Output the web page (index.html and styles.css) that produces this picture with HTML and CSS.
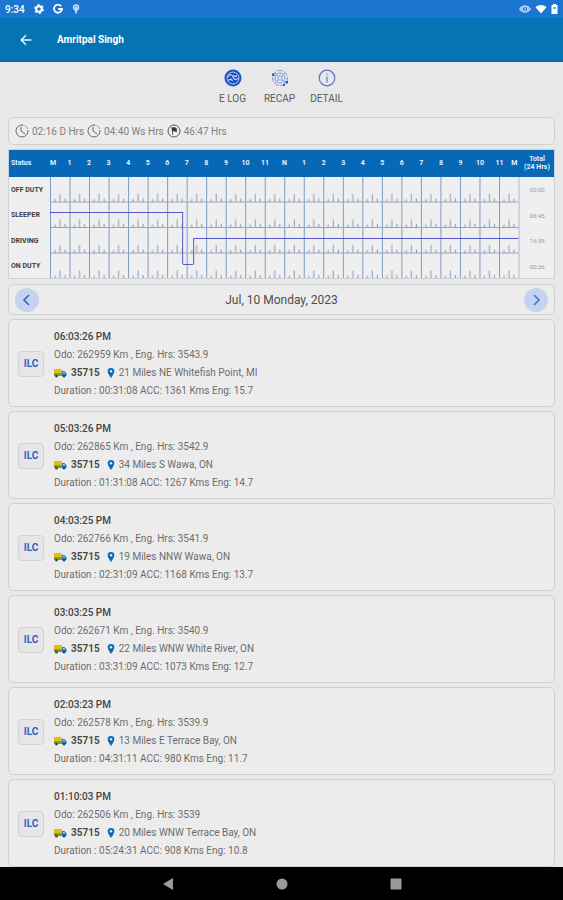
FILE: index.html
```html
<!DOCTYPE html>
<html lang="en">
<head>
<meta charset="utf-8">
<meta name="viewport" content="width=device-width, initial-scale=1">
<title>Driver Log</title>
<link rel="stylesheet" href="styles.css">
</head>
<body>
<svg class="sprite" aria-hidden="true">
  <symbol id="truck" viewBox="0 0 13 10">
    <rect x="0" y="1" width="8" height="4" fill="#e3bd18"/>
    <rect x="0" y="5" width="8" height="3" fill="#8a9a2c"/>
    <path d="M8 3h2.500L12.500 5.500V8H8z" fill="#2774ad"/>
    <path d="M9 4h1.200l1 1.500H9z" fill="#b5d4e8"/>
    <circle cx="2.500" cy="8" r="1.500" fill="#25604f"/>
    <circle cx="10" cy="8" r="1.500" fill="#174f86"/>
  </symbol>
  <symbol id="pin" viewBox="0 0 8 10">
    <path d="M4 0a3.300 3.300 0 0 0-3.300 3.300C.7 5.800 4 10 4 10s3.300-4.200 3.300-6.700A3.300 3.300 0 0 0 4 0z" fill="#0c6bb8"/>
    <circle cx="4" cy="3.300" r="1.200" fill="#dce9f3"/>
  </symbol>
  <symbol id="clock" viewBox="0 0 14 14">
    <g fill="none" stroke="#666" stroke-width="1">
      <path d="M8.500 1.200A6 6 0 1 0 12.900 6"/>
      <path d="M9.800 1.700A6 6 0 0 1 12.500 4.500" stroke-dasharray="1.500 1"/>
      <path d="M6 3v4l4 3"/>
    </g>
  </symbol>
</svg>

<div class="status-bar">
  <span class="time">9:34</span>
  <svg width="10" height="10" viewBox="0 0 10 10"><circle cx="5" cy="5" r="2.800" fill="none" stroke="#fff" stroke-width="2"/><circle cx="5" cy="5" r="4.200" fill="none" stroke="#fff" stroke-width="1.400" stroke-dasharray="2.200 2.200"/></svg>
  <svg width="10" height="10" viewBox="0 0 10 10"><path d="M8.200 2.300A4 4 0 1 0 9 5H5.200" fill="none" stroke="#fff" stroke-width="1.800"/></svg>
  <svg width="8" height="10" viewBox="0 0 8 10"><circle cx="4" cy="3.500" r="2.600" fill="#78aee8" stroke="#d5e6fa" stroke-width="1.200"/><path d="M4 3v6.500" stroke="#d5e6fa" stroke-width="1.600"/></svg>
  <span class="spacer"></span>
  <svg width="12" height="10" viewBox="0 0 12 10"><circle cx="6" cy="5" r="3" fill="none" stroke="#b9d6f5" stroke-width="1.600"/><path d="M6 3.500v3M3 2.500.8 5 3 7.500M9 2.500 11.200 5 9 7.500" fill="none" stroke="#b9d6f5" stroke-width="1.200"/></svg>
  <svg width="12" height="10" viewBox="0 0 12 10"><path d="M.5 3.200C3.500.2 8.500.2 11.500 3.200L6 9.500z" fill="#fff"/></svg>
  <svg width="7" height="10" viewBox="0 0 7 10"><path d="M2 0h3v1h1.500v9h-6V1H2z" fill="#fff"/><path d="M2 3h3v2H2z" fill="#7fb0e4"/></svg>
</div>

<header class="app-bar">
  <button class="back" type="button" aria-label="Back">
    <svg width="12" height="12" viewBox="0 0 12 12"><path d="M11.500 6H1.500M6 1.200 1.200 6 6 10.800" fill="none" stroke="#e4f1fa" stroke-width="1.600"/></svg>
  </button>
  <h1>Amritpal Singh</h1>
</header>

<main>
  <nav class="tabs">
    <a href="#elog">
      <svg width="18" height="18" viewBox="0 0 18 18"><circle cx="9" cy="9" r="8.500" fill="#1d4fc4"/><circle cx="9" cy="9" r="6" fill="none" stroke="#b9cbf3" stroke-width="1"/><path d="M4 8c2-4 4-2 5 0s3 4 5 1M4.500 11.500c2-2 3-1 4 .5M9.500 6c1 1.500 2 2 3.500.5" fill="none" stroke="#c9d7f6" stroke-width="1.200"/></svg>
      <span>E LOG</span>
    </a>
    <a href="#recap">
      <svg width="18" height="18" viewBox="0 0 18 18"><g fill="none" stroke="#7b96d8" stroke-width="1"><circle cx="9" cy="9" r="7.500" stroke-dasharray="5 1.500"/><circle cx="9" cy="9" r="5"/><circle cx="9" cy="9" r="2.200"/><path d="M4 4l3.500 3.500M14 4l-3.500 3.500M4 14l3.500-3.500M14 14l-3.500-3.500"/></g><path d="M1 4.500h2.500v2.500H1zM14.500 12H17v2.500h-2.500zM12 15h2v2h-2z" fill="#2d5bcb"/></svg>
      <span>RECAP</span>
    </a>
    <a href="#detail">
      <svg width="18" height="18" viewBox="0 0 18 18"><circle cx="9" cy="9" r="7.800" fill="none" stroke="#5b74c6" stroke-width="1.200"/><path d="M9 4.500v1.500M9 7.500v6" stroke="#6c86ce" stroke-width="1.300"/></svg>
      <span>DETAIL</span>
    </a>
  </nav>

  <section class="panel hours">
    <span><svg width="14" height="14"><use href="#clock"/></svg>02:16 D Hrs</span>
    <span><svg width="14" height="14"><use href="#clock"/></svg>04:40 Ws Hrs</span>
    <span><svg width="14" height="14" viewBox="0 0 14 14"><circle cx="7" cy="7" r="6" fill="none" stroke="#555" stroke-width="1"/><path d="M4.500 3.500h3l2 1v3.500l-2-1H5.500v4" fill="#333" stroke="#555" stroke-width=".8"/></svg>46:47 Hrs</span>
  </section>

  <table class="log">
    <thead>
      <tr>
        <th class="label" scope="col">Status</th>
        <th scope="col">
          <div class="scale"><span>M</span><span>1</span><span>2</span><span>3</span><span>4</span><span>5</span><span>6</span><span>7</span><span>8</span><span>9</span><span>10</span><span>11</span><span>N</span><span>1</span><span>2</span><span>3</span><span>4</span><span>5</span><span>6</span><span>7</span><span>8</span><span>9</span><span>10</span><span>11</span><span>M</span></div>
        </th>
        <th class="total" scope="col">Total<br>(24 Hrs)</th>
      </tr>
    </thead>
    <tbody>
      <tr>
        <th class="label" scope="row">OFF DUTY</th>
        <td class="plot" rowspan="4">
          <svg viewBox="0 0 468 102" preserveAspectRatio="none" role="img" aria-label="Duty status over 24 hours">
            <defs>
              <pattern id="hour" width="19.500" height="25.500" patternUnits="userSpaceOnUse">
                <path d="M.5 0v25.500" stroke="#7f9ac2" stroke-width="1"/>
                <path d="M0 25h19.500" stroke="#91a6c4" stroke-width="1"/>
                <path d="M5 22v3M15 21.500v3.500" stroke="#8795a8" stroke-width="1"/>
                <path d="M10 17v8" stroke="#8e9bab" stroke-width="1"/>
              </pattern>
            </defs>
            <rect width="468" height="102" fill="url(#hour)"/>
            <path d="M0 35.500H132.500V86q0 1.500 1.500 1.500h8q1.500 0 1.500-1.500V61.500H468" fill="none" stroke="#5557cf" stroke-width="1"/>
          </svg>
        </td>
        <td class="total">00:00</td>
      </tr>
      <tr><th class="label" scope="row">SLEEPER</th><td class="total">06:45</td></tr>
      <tr><th class="label" scope="row">DRIVING</th><td class="total">16:39</td></tr>
      <tr><th class="label" scope="row">ON DUTY</th><td class="total">00:36</td></tr>
    </tbody>
  </table>

  <section class="panel date">
    <button type="button" aria-label="Previous day"><svg width="12" height="12" viewBox="0 0 12 12"><path d="M8 1 3 6l5 5" fill="none" stroke="#3565c8" stroke-width="1.600"/></svg></button>
    <h2>Jul, 10 Monday, 2023</h2>
    <button type="button" aria-label="Next day"><svg width="12" height="12" viewBox="0 0 12 12"><path d="m4 1 5 5-5 5" fill="none" stroke="#4571d2" stroke-width="1.600"/></svg></button>
  </section>

  <ul class="events">
    <li class="panel event"><span class="badge">ILC</span><div class="info"><h3>06:03:26 PM</h3><p>Odo: 262959 Km , Eng. Hrs: 3543.9</p><p class="place"><svg width="13" height="10"><use href="#truck"/></svg><b>35715</b><svg width="8" height="10"><use href="#pin"/></svg>21 Miles NE Whitefish Point, MI</p><p>Duration : 00:31:08 ACC: 1361 Kms Eng: 15.7</p></div></li>
    <li class="panel event"><span class="badge">ILC</span><div class="info"><h3>05:03:26 PM</h3><p>Odo: 262865 Km , Eng. Hrs: 3542.9</p><p class="place"><svg width="13" height="10"><use href="#truck"/></svg><b>35715</b><svg width="8" height="10"><use href="#pin"/></svg>34 Miles S Wawa, ON</p><p>Duration : 01:31:08 ACC: 1267 Kms Eng: 14.7</p></div></li>
    <li class="panel event"><span class="badge">ILC</span><div class="info"><h3>04:03:25 PM</h3><p>Odo: 262766 Km , Eng. Hrs: 3541.9</p><p class="place"><svg width="13" height="10"><use href="#truck"/></svg><b>35715</b><svg width="8" height="10"><use href="#pin"/></svg>19 Miles NNW Wawa, ON</p><p>Duration : 02:31:09 ACC: 1168 Kms Eng: 13.7</p></div></li>
    <li class="panel event"><span class="badge">ILC</span><div class="info"><h3>03:03:25 PM</h3><p>Odo: 262671 Km , Eng. Hrs: 3540.9</p><p class="place"><svg width="13" height="10"><use href="#truck"/></svg><b>35715</b><svg width="8" height="10"><use href="#pin"/></svg>22 Miles WNW White River, ON</p><p>Duration : 03:31:09 ACC: 1073 Kms Eng: 12.7</p></div></li>
    <li class="panel event"><span class="badge">ILC</span><div class="info"><h3>02:03:23 PM</h3><p>Odo: 262578 Km , Eng. Hrs: 3539.9</p><p class="place"><svg width="13" height="10"><use href="#truck"/></svg><b>35715</b><svg width="8" height="10"><use href="#pin"/></svg>13 Miles E Terrace Bay, ON</p><p>Duration : 04:31:11 ACC: 980 Kms Eng: 11.7</p></div></li>
    <li class="panel event"><span class="badge">ILC</span><div class="info"><h3>01:10:03 PM</h3><p>Odo: 262506 Km , Eng. Hrs: 3539</p><p class="place"><svg width="13" height="10"><use href="#truck"/></svg><b>35715</b><svg width="8" height="10"><use href="#pin"/></svg>20 Miles WNW Terrace Bay, ON</p><p>Duration : 05:24:31 ACC: 908 Kms Eng: 10.8</p></div></li>
  </ul>
</main>

<footer class="system-nav">
  <button type="button" aria-label="Back"><svg width="12" height="12" viewBox="0 0 12 12"><path d="M11 0v12L1 6z" fill="#9a9a9a"/></svg></button>
  <button type="button" aria-label="Home"><svg width="12" height="12" viewBox="0 0 12 12"><circle cx="6" cy="6" r="5.500" fill="#9a9a9a"/></svg></button>
  <button type="button" aria-label="Recent apps"><svg width="12" height="12" viewBox="0 0 12 12"><rect x=".5" y=".5" width="11" height="11" rx="1" fill="#9a9a9a"/></svg></button>
</footer>
</body>
</html>
```
FILE: styles.css
```css
* { box-sizing: border-box; margin: 0; padding: 0; }

body {
  display: flex;
  flex-direction: column;
  height: 100vh;
  background: #e8e8e8;
  color: #6c6c6c;
  font-family: Roboto, "Liberation Sans", sans-serif;
  font-size: 10px;
}

button { border: 0; background: none; cursor: pointer; }
a { color: inherit; text-decoration: none; }
svg { display: block; flex: none; }
.sprite { position: absolute; width: 0; height: 0; }

.status-bar {
  display: flex;
  flex: none;
  align-items: center;
  gap: 9px;
  height: 18px;
  padding: 0 5px;
  background: #1b76d2;
  color: #fff;
}
.time { font-weight: 500; }
.spacer { flex: 1; }
.spacer ~ svg { margin-left: -5px; }

.app-bar {
  display: flex;
  flex: none;
  align-items: center;
  height: 44px;
  padding: 0 20px;
  gap: 25px;
  background: #0474b4;
  color: #fff;
  border-bottom: 1px solid #0a62a8;
}
.app-bar h1 { font-size: 10px; font-weight: 700; }

main {
  flex: 1;
  min-height: 0;
  overflow: hidden;
  padding: 0 8px;
}

.tabs {
  display: flex;
  justify-content: center;
  height: 55px;
  padding: 7px 4px 0 0;
}
.tabs a {
  display: flex;
  flex-direction: column;
  align-items: center;
  gap: 6px;
  width: 47px;
  line-height: 12px;
  color: #5c5c5c;
}

.panel {
  background: #ececec;
  border: 1px solid #d0d0d0;
  border-radius: 6px;
}

.hours {
  display: flex;
  align-items: center;
  gap: 3px;
  height: 28px;
  padding: 0 6px;
  color: #808080;
}
.hours span { display: flex; align-items: center; gap: 3px; }

.log {
  width: 100%;
  margin-top: 4px;
  table-layout: fixed;
  border-collapse: collapse;
  background: #efefef;
  outline: 1px solid #cdd2da;
  outline-offset: -1px;
}
.log thead th {
  height: 28px;
  background: #0768b8;
  color: #e6f0f9;
  font-size: 7px;
  line-height: 8px;
}
.log .label { width: 42px; padding-left: 3px; text-align: left; }
.log .total { width: 36px; text-align: center; }
.log tbody .label { font-size: 7px; font-weight: 700; color: #3c3c3c; white-space: nowrap; }
.log tbody .total { font-size: 6px; color: #999; border-left: 1px solid #cdd2da; }
.log tbody tr { height: 25px; }
.log tbody tr:nth-child(even) { height: 26px; }
.plot svg { width: 100%; height: 102px; }

.scale { display: flex; }
.scale span { flex: 2 1 0; min-width: 0; text-align: center; }
.scale span:first-child { flex-grow: 1; text-align: left; }
.scale span:last-child { flex-grow: 1; }

.date {
  display: flex;
  align-items: center;
  justify-content: space-between;
  height: 31px;
  margin-top: 5px;
  padding: 0 6px;
}
.date h2 { font-size: 12px; font-weight: 400; color: #4c4c4c; }
.date button {
  display: grid;
  place-items: center;
  width: 24px;
  height: 24px;
  border-radius: 50%;
  background: #c5d3ef;
}

.events {
  display: grid;
  gap: 4px;
  margin-top: 4px;
  list-style: none;
}
.event {
  display: flex;
  align-items: center;
  gap: 10px;
  height: 88px;
  padding: 1px 9px 0;
}
.badge {
  display: grid;
  place-items: center;
  width: 26px;
  height: 26px;
  border: 1px solid #d2d2d2;
  border-radius: 4px;
  background: #e6e6e8;
  color: #3c5cc0;
  font-weight: 700;
}
.info { line-height: 18px; }
.info h3 { font-size: 10px; font-weight: 500; color: #444; }
.place { display: flex; align-items: center; gap: 4px; }
.place b { margin-right: 3px; color: #4c4c4c; }

.system-nav {
  display: flex;
  flex: none;
  align-items: center;
  justify-content: center;
  gap: 102px;
  height: 33px;
  background: #000;
}
```
